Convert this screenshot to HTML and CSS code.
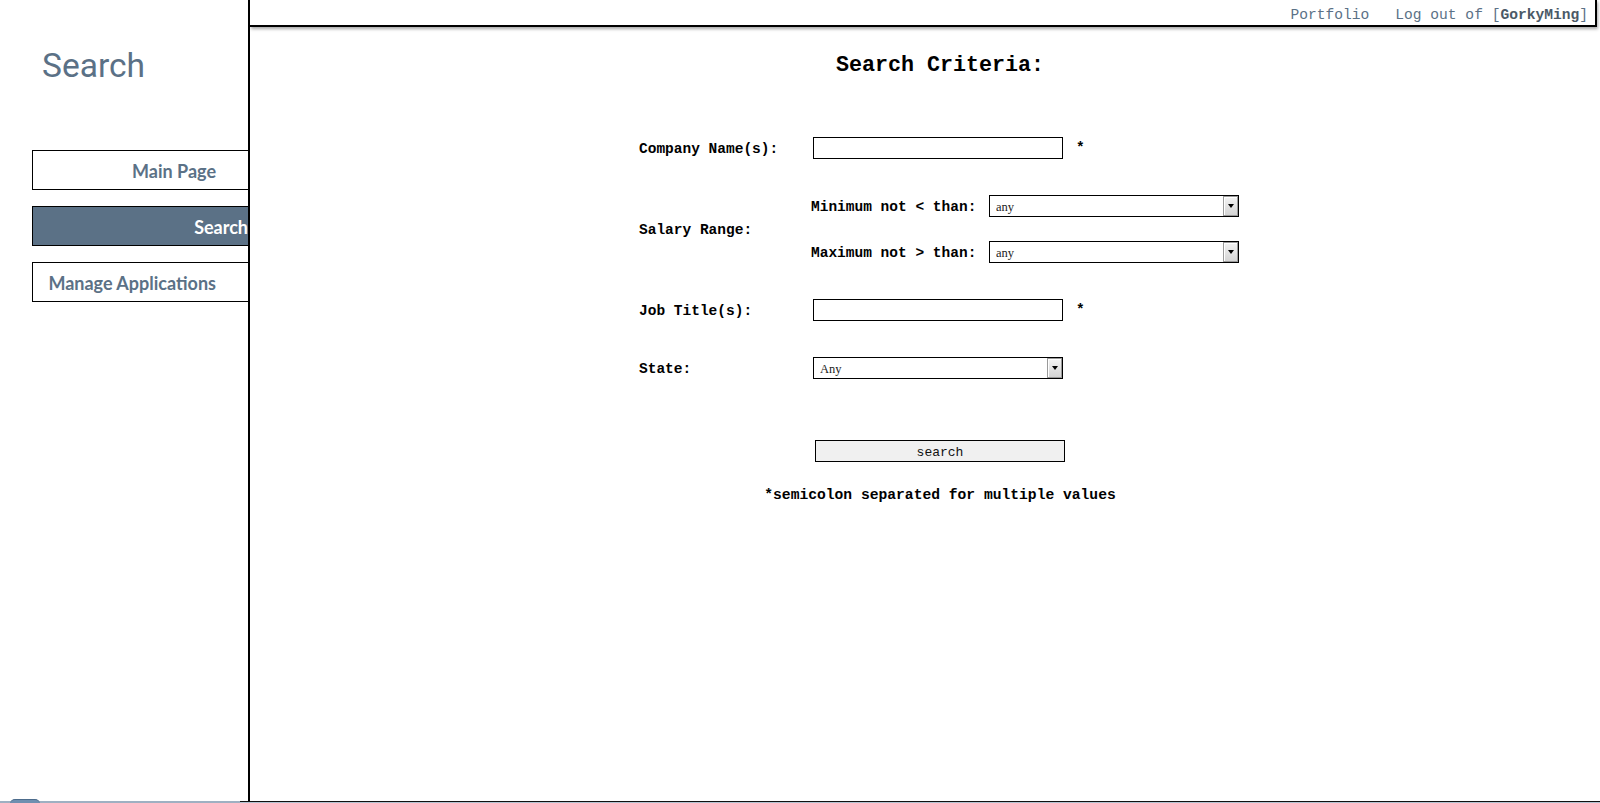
FILE: index.html
```html
<!DOCTYPE html>
<html>
<head>
<meta charset="utf-8">
<title>Search</title>
<link rel="stylesheet" href="styles.css">
</head>
<body>
<div class="app">
  <aside class="sidebar">
    <h1 class="side-title">Search</h1>
    <nav class="side-nav">
      <a class="nav-item">Main Page</a>
      <a class="nav-item active">Search</a>
      <a class="nav-item">Manage Applications</a>
    </nav>
  </aside>
  <main class="main">
    <header class="topbar">
      <a class="top-link">Portfolio</a>
      <a class="top-link">Log out of [<b class="user">GorkyMing</b>]</a>
    </header>
    <section class="content">
      <h2 class="criteria-title">Search Criteria:</h2>
      <form class="form">
        <div class="row">
          <label class="label">Company Name(s):</label>
          <input class="text-input" type="text">
          <span class="star">*</span>
        </div>
        <div class="row salary">
          <label class="label">Salary Range:</label>
          <div class="sub-rows">
            <div class="sub-row">
              <label class="sub-label">Minimum not &lt; than:</label>
              <div class="select-wrap"><select class="select"><option>any</option></select></div>
            </div>
            <div class="sub-row">
              <label class="sub-label">Maximum not &gt; than:</label>
              <div class="select-wrap"><select class="select"><option>any</option></select></div>
            </div>
          </div>
        </div>
        <div class="row">
          <label class="label">Job Title(s):</label>
          <input class="text-input" type="text">
          <span class="star">*</span>
        </div>
        <div class="row">
          <label class="label">State:</label>
          <div class="select-wrap"><select class="select"><option>Any</option></select></div>
        </div>
      </form>
      <button class="search-btn" type="button">search</button>
      <p class="note">*semicolon separated for multiple values</p>
    </section>
  </main>
</div>
<div class="taskbar">
  <div class="task-start"><span class="orb"></span></div>
  <div class="task-rest"></div>
</div>
</body>
</html>
```

FILE: styles.css
```css
html, body {
  margin: 0;
  padding: 0;
  background: #fff;
}
body {
  width: 1600px;
  height: 803px;
  overflow: hidden;
  display: flex;
  flex-direction: column;
}
.app {
  display: flex;
  height: 801px;
}
.sidebar {
  width: 248px;
  border-right: 2px solid #000;
  flex-shrink: 0;
}
.side-title {
  margin: 0;
  padding: 47px 0 0 42px;
  height: 106px;
  box-sizing: border-box;
  font-family: Roboto, "Noto Sans", sans-serif;
  font-weight: 400;
  font-size: 33.5px;
  line-height: 38px;
  color: #5b7186;
}
.side-nav {
  display: flex;
  flex-direction: column;
  gap: 16px;
  padding-left: 32px;
  padding-top: 44px;
}
.nav-item {
  display: block;
  height: 40px;
  box-sizing: border-box;
  border: 1px solid #000;
  border-right: none;
  text-align: right;
  padding-right: 32px;
  font-family: Lato, "Liberation Sans", sans-serif;
  font-weight: 700;
  font-size: 18px;
  line-height: 40px;
  color: #5b7186;
  white-space: nowrap;
  overflow: hidden;
}
.nav-item.active {
  background: #5b7186;
  color: #fff;
  padding-right: 0;
}
.main {
  flex: 1;
  display: flex;
  flex-direction: column;
}
.topbar {
  border-bottom: 2px solid #000;
  border-right: 2px solid #000;
  margin-right: 3px;
  box-shadow: 1px 2px 3px rgba(0,0,0,0.35);
  display: flex;
  justify-content: flex-end;
  gap: 26px;
  padding-right: 7px;
  padding-top: 2px;
  box-sizing: content-box;
  height: 23px;
  font-family: "Liberation Mono", monospace;
  font-size: 14.6px;
  line-height: 27px;
  color: #5b7186;
}
.top-link {
  white-space: pre;
}
.user {
  color: #4b5966;
}
.content {
  padding-left: 30px;
  display: flex;
  flex-direction: column;
  align-items: center;
}
.criteria-title {
  margin: 26px 0 0;
  font-family: "Liberation Mono", monospace;
  font-weight: 700;
  font-size: 21.7px;
  line-height: 26px;
}
.form {
  margin-top: 58px;
  width: 602px;
  display: flex;
  flex-direction: column;
  gap: 36px;
  font-family: "Liberation Mono", monospace;
  font-weight: 700;
  font-size: 14.5px;
}
.row {
  display: flex;
  align-items: center;
}
.label {
  width: 174px;
  flex-shrink: 0;
  white-space: nowrap;
  padding-top: 1px;
}
.sub-rows {
  display: flex;
  flex-direction: column;
  gap: 24px;
  margin-left: -2px;
}
.sub-row {
  display: flex;
  align-items: center;
}
.sub-label {
  width: 178px;
  flex-shrink: 0;
  white-space: nowrap;
  padding-top: 1px;
}
.text-input {
  width: 250px;
  height: 22px;
  box-sizing: border-box;
  border: 1px solid #000;
  margin: 0;
  padding: 0 4px;
  background: #fff;
}
.star {
  margin-left: 13px;
}
.select-wrap {
  position: relative;
  width: 250px;
  height: 22px;
}
.select {
  appearance: none;
  -webkit-appearance: none;
  width: 100%;
  height: 22px;
  box-sizing: border-box;
  border: 1px solid #000;
  border-radius: 0;
  background: #fff;
  margin: 0;
  padding: 2px 6px 0;
  font-family: "Liberation Serif", serif;
  font-size: 12.5px;
  color: #222;
}
.select-wrap::after {
  content: "";
  position: absolute;
  top: 1px;
  right: 1px;
  width: 15px;
  height: 20px;
  box-sizing: border-box;
  border: 1px solid #9a9a9a;
  box-shadow: inset 1px 1px 0 #fff;
  background: linear-gradient(#f3f3f3, #d4d4d4);
  pointer-events: none;
}
.select-wrap::before {
  content: "";
  position: absolute;
  z-index: 1;
  top: 9px;
  right: 5px;
  width: 0;
  height: 0;
  border-left: 3.5px solid transparent;
  border-right: 3.5px solid transparent;
  border-top: 4px solid #000;
  pointer-events: none;
}
.search-btn {
  margin-top: 61px;
  width: 250px;
  height: 22px;
  box-sizing: border-box;
  border: 1px solid #000;
  border-radius: 0;
  background: #f0f0f0;
  font-family: "Liberation Mono", monospace;
  font-size: 13px;
  line-height: 18px;
  padding: 3px 0 0;
  color: #111;
}
.note {
  margin: 24px 0 0;
  font-family: "Liberation Mono", monospace;
  font-weight: 700;
  font-size: 14.65px;
  line-height: 18px;
}
.taskbar {
  height: 2px;
  display: flex;
}
.task-start {
  width: 240px;
  position: relative;
  background: #9fb0c2;
}
.orb {
  position: absolute;
  left: 10px;
  top: -2px;
  width: 30px;
  height: 4px;
  border-radius: 15px 15px 0 0;
  background: #6f8fb0;
  border-top: 1px solid #4d6c8c;
}
.task-rest {
  flex: 1;
  border-top: 1px solid #111;
  background: #b4c2d0;
}
```
